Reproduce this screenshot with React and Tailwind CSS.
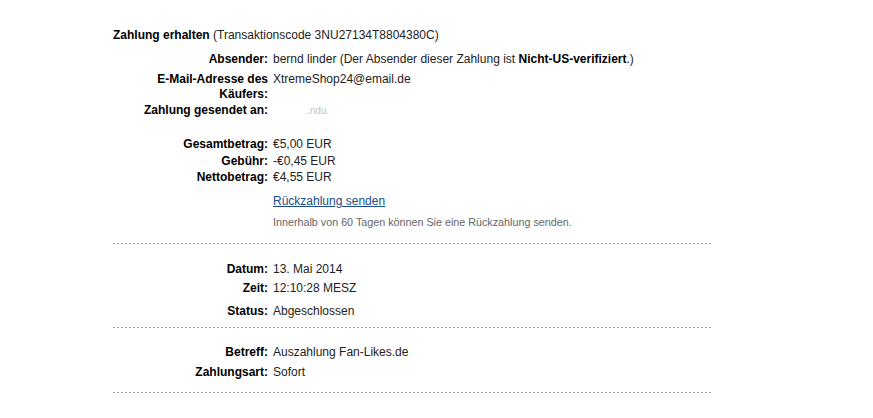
import React from 'react';

// Dotted separator like the old PayPal detail pages
function Divider({ className = '' }) {
  return (
    <div className={`h-px w-[598px] bg-[linear-gradient(to_right,#9a9a9a_50%,transparent_50%)] bg-[length:4px_1px] ${className}`} />
  );
}

function Row({ label, children, className = '' }) {
  return (
    <div className={`flex leading-[15px] ${className}`}>
      <div className="w-[155px] shrink-0 text-right font-bold text-black">{label}</div>
      <div className="pl-[5px] text-[#222]">{children}</div>
    </div>
  );
}

export default function App() {
  return (
    <div className="min-h-[418px] bg-white pl-[113px] pt-[28px] font-['Liberation_Sans',Arial,sans-serif] text-[12px]">
      <div className="leading-[15px] text-[#222]">
        <span className="font-bold text-black">Zahlung erhalten</span> (Transaktionscode 3NU27134T8804380C)
      </div>

      <Row label="Absender:" className="mt-[9px]">
        bernd linder (Der Absender dieser Zahlung ist <span className="font-bold text-black">Nicht-US-verifiziert</span>.)
      </Row>
      <Row label={<>E-Mail-Adresse des<br />Käufers:</>} className="mt-[5px]">
        XtremeShop24@email.de
      </Row>
      <Row label="Zahlung gesendet an:" className="mt-px">
        <span className="ml-[32px] text-[10px] tracking-tight text-[#c4c4c4]">..ndu.</span>
      </Row>

      <Row label="Gesamtbetrag:" className="mt-[19px]">€5,00 EUR</Row>
      <Row label="Gebühr:" className="mt-[2px]">-€0,45 EUR</Row>
      <Row label="Nettobetrag:" className="mt-px">€4,55 EUR</Row>

      <div className="mt-[9px] pl-[160px] leading-[15px]">
        <a href="#" className="text-[#1a4a8a] underline">Rückzahlung senden</a>
      </div>
      <div className="mt-[6px] pl-[160px] text-[10.75px] leading-[14px] text-[#666]">
        Innerhalb von 60 Tagen können Sie eine Rückzahlung senden.
      </div>

      <Divider className="mt-[14px]" />

      <Row label="Datum:" className="mt-[18px]">13. Mai 2014</Row>
      <Row label="Zeit:" className="mt-[4px]">12:10:28 MESZ</Row>
      <Row label="Status:" className="mt-[8px]">Abgeschlossen</Row>

      <Divider className="mt-[8px]" />

      <Row label="Betreff:" className="mt-[17px]">Auszahlung Fan-Likes.de</Row>
      <Row label="Zahlungsart:" className="mt-[5px]">Sofort</Row>

      <Divider className="mt-[12px]" />
    </div>
  );
}
